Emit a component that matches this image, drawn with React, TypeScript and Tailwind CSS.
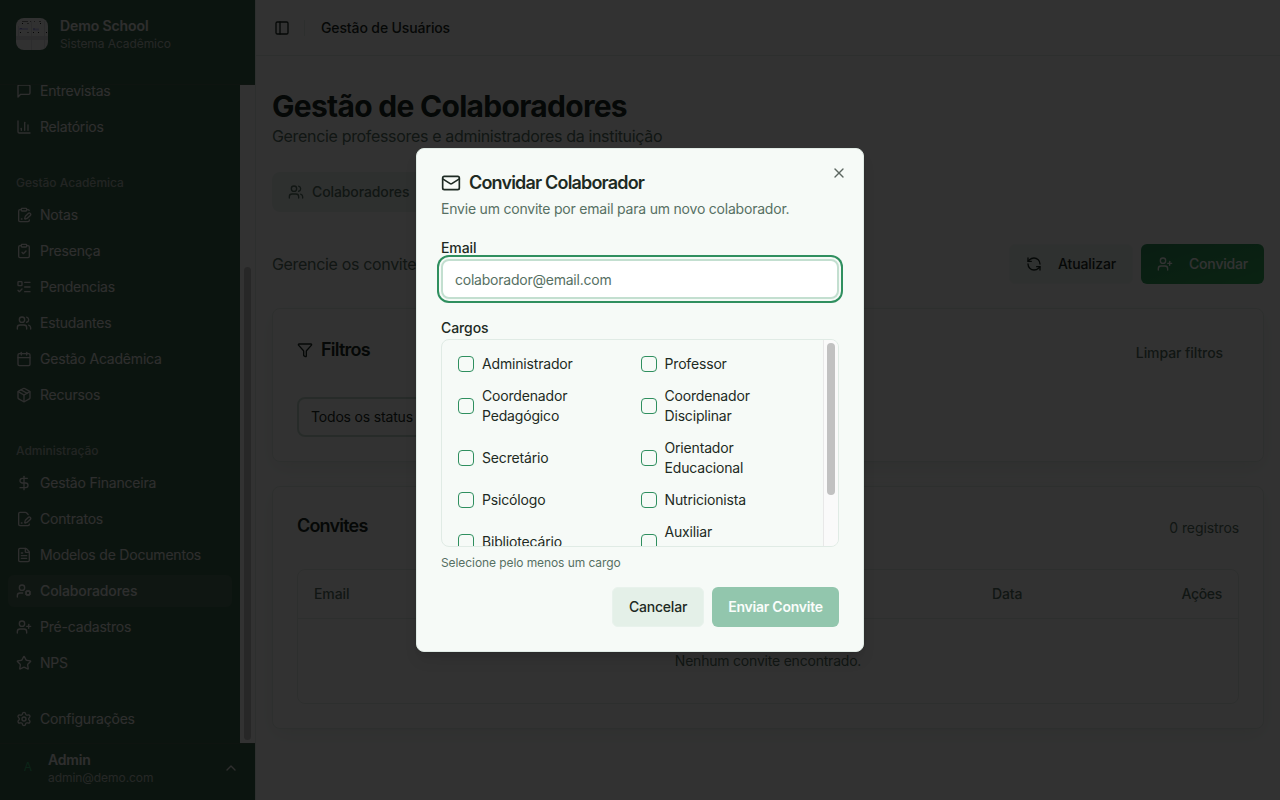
import type { ReactNode } from 'react';
import {
  Calendar,
  ChartColumn,
  ChevronUp,
  ClipboardCheck,
  ClipboardPenLine,
  DollarSign,
  FilePenLine,
  FileText,
  Funnel,
  ListTodo,
  Mail,
  Package,
  PanelLeft,
  RefreshCcw,
  Settings,
  Star,
  UserCog,
  UserPlus,
  Users,
  X,
  type LucideIcon,
} from 'lucide-react';

interface NavItem {
  label: string;
  icon?: LucideIcon;
  active?: boolean;
}

interface NavGroup {
  title?: string;
  items: NavItem[];
}

const navGroups: NavGroup[] = [
  {
    items: [{ label: 'Entrevistas' }, { label: 'Relatórios', icon: ChartColumn }],
  },
  {
    title: 'Gestão Acadêmica',
    items: [
      { label: 'Notas', icon: ClipboardPenLine },
      { label: 'Presença', icon: ClipboardCheck },
      { label: 'Pendencias', icon: ListTodo },
      { label: 'Estudantes', icon: Users },
      { label: 'Gestão Acadêmica', icon: Calendar },
      { label: 'Recursos', icon: Package },
    ],
  },
  {
    title: 'Administração',
    items: [
      { label: 'Gestão Financeira', icon: DollarSign },
      { label: 'Contratos', icon: FilePenLine },
      { label: 'Modelos de Documentos', icon: FileText },
      { label: 'Colaboradores', icon: UserCog, active: true },
      { label: 'Pré-cadastros', icon: UserPlus },
      { label: 'NPS', icon: Star },
    ],
  },
  {
    items: [{ label: 'Configurações', icon: Settings }],
  },
];

const roles = [
  'Administrador',
  'Professor',
  'Coordenador Pedagógico',
  'Coordenador Disciplinar',
  'Secretário',
  'Orientador Educacional',
  'Psicólogo',
  'Nutricionista',
  'Bibliotecário',
  'Auxiliar Administrativo',
];

function MessageIcon() {
  return (
    <svg className="size-4 shrink-0" viewBox="0 0 24 24" fill="none" stroke="currentColor" strokeWidth="2" strokeLinecap="round" strokeLinejoin="round">
      <path d="M21 15a2 2 0 0 1-2 2H7l-4 4V5a2 2 0 0 1 2-2h14a2 2 0 0 1 2 2z" />
    </svg>
  );
}

function SchoolLogo() {
  return (
    <svg className="size-8 shrink-0 rounded-lg" viewBox="0 0 32 32">
      <rect width="32" height="32" fill="#f4f4f6" />
      <rect y="18" width="32" height="4" fill="#dcdce0" />
      <path d="M15.5 3v29M28.5 3v29M2.5 8v10" stroke="#d0d0d6" strokeWidth="0.7" />
      <path d="M3 11h9M17 11.500h6" stroke="#c6c6ee" strokeWidth="2" />
      <path d="M4 10.500h2M17 11h2" stroke="#8080d8" strokeWidth="1" />
      <path d="M6 3.500h6M14 3.500h1M18 3.500h1M23 3.500h2" stroke="#666" strokeWidth="0.8" />
      <path d="M6 5.500h1M11.500 5.500h1M24 5.500h1M4 14.500h1M11.500 14.500h1M17 14.500h1M22 14.500h1M30 14.500h1" stroke="#222" strokeWidth="1" />
    </svg>
  );
}

function Sidebar() {
  return (
    <aside className="flex h-full w-64 shrink-0 flex-col border-r border-[#e0e8e3] bg-[#3b654b] text-[#e6e6e6]">
      <div className="flex h-[85px] shrink-0 items-start gap-3 border-b border-[#47634f] px-4 pt-[17px]">
        <div className="pt-px">
          <SchoolLogo />
        </div>
        <div className="flex flex-col">
          <span className="text-sm leading-[18px] font-semibold tracking-[-0.1px]">Demo School</span>
          <span className="mt-px text-xs leading-4 tracking-[-0.08px] text-[#bac2bd]">Sistema Acadêmico</span>
        </div>
      </div>

      <div className="flex min-h-0 flex-1">
        <nav className="flex min-w-0 flex-1 flex-col justify-end gap-2 overflow-hidden">
          {navGroups.map((group, i) => (
            <div key={i} className="shrink-0 p-2">
              {group.title && (
                <div className="flex h-8 items-center px-2 text-xs font-medium tracking-[-0.02px] text-[#a9b5ae]">{group.title}</div>
              )}
              <ul className="flex flex-col gap-1">
                {group.items.map(({ label, icon: Icon, active }) => (
                  <li
                    key={label}
                    className={
                      active
                        ? 'flex h-8 items-center gap-2 rounded-md bg-[#4a7059] px-2 text-sm font-medium tracking-[-0.1px]'
                        : 'flex h-8 items-center gap-2 rounded-md px-2 text-sm tracking-[-0.2px]'
                    }
                  >
                    {Icon ? <Icon className="size-4 shrink-0" /> : <MessageIcon />}
                    <span>{label}</span>
                  </li>
                ))}
              </ul>
            </div>
          ))}
        </nav>
        <div className="w-[15px] shrink-0 bg-[#fafafa] px-1 pt-[182px] pb-[3px]">
          <div className="h-full rounded-full bg-[#c1c1c1]" />
        </div>
      </div>

      <div className="flex h-[57px] shrink-0 items-start border-t border-[#47634f] px-4 pt-[7px]">
        <div className="flex h-8 w-6 items-center justify-center text-xs text-[#3cb878]">A</div>
        <div className="ml-2 flex flex-1 flex-col">
          <span className="text-sm leading-[18px] font-semibold tracking-[-0.2px]">Admin</span>
          <span className="mt-px text-xs leading-4 tracking-[-0.06px] text-[#bac2bd]">admin@demo.com</span>
        </div>
        <ChevronUp className="mt-[9px] size-4" />
      </div>
    </aside>
  );
}

function Card({ children, className }: { children: ReactNode; className: string }) {
  return (
    <div className={`rounded-lg border border-[#e2ebe6] bg-[#fafafa] p-6 shadow-[0_6px_20px_-2px_rgba(40,110,75,0.1)] ${className}`}>
      {children}
    </div>
  );
}

function Content() {
  return (
    <div className="flex min-w-0 flex-1 flex-col bg-[#fafafa] text-[#1d2a23]">
      <header className="flex h-14 shrink-0 items-center border-b border-[#e2e8e4] px-4">
        <PanelLeft className="ml-0.5 size-4" />
        <div className="ml-3.5 h-4 w-px bg-[#e2e8e4]" />
        <span className="ml-4 text-sm font-medium tracking-[-0.12px]">Gestão de Usuários</span>
      </header>

      <main className="flex flex-col px-4 pt-8">
        <h1 className="text-3xl font-bold tracking-[-0.71px]">Gestão de Colaboradores</h1>
        <p className="tracking-[-0.33px] text-[#567063]">Gerencie professores e administradores da instituição</p>

        <div className="mt-6 flex h-10 w-[420px] items-center rounded-lg bg-[#e6eeea] px-4 text-[#567063]">
          <Users className="size-4" />
          <span className="ml-2 text-sm font-medium tracking-[-0.1px]">Colaboradores</span>
        </div>

        <div className="mt-8 flex h-10 items-center justify-between">
          <p className="tracking-[-0.33px] text-[#567063]">Gerencie os convites</p>
          <div className="flex gap-2">
            <button className="flex h-10 w-[124px] items-center gap-4 rounded-md border border-[#f0f5f2] bg-[#ebf2ee] px-4 text-sm font-medium tracking-[-0.1px] whitespace-nowrap">
              <RefreshCcw className="size-4 shrink-0" />
              Atualizar
            </button>
            <button className="flex h-10 w-[123px] items-center gap-4 rounded-md bg-linear-to-br from-[#2e8f5c] to-[#35ad5a] px-4 text-sm font-medium tracking-[-0.18px] whitespace-nowrap text-[#fafafa]">
              <UserPlus className="size-4 shrink-0" />
              Convidar
            </button>
          </div>
        </div>

        <Card className="mt-6 h-[154px]">
          <div className="flex h-10 items-center justify-between">
            <h2 className="mb-1.5 flex items-center gap-2 text-lg font-semibold tracking-[-0.75px]">
              <Funnel className="size-4" />
              Filtros
            </h2>
            <span className="px-4 text-sm font-medium tracking-[-0.08px] text-[#567063]">Limpar filtros</span>
          </div>
          <div className="mt-6 flex h-10 w-[200px] items-center rounded-lg border-2 border-[#c3d8cd] px-3 text-sm tracking-[-0.17px]">
            Todos os status
          </div>
        </Card>

        <Card className="mt-6 h-[243px]">
          <div className="flex h-[34px] items-center justify-between">
            <h2 className="mb-[5px] text-lg font-semibold tracking-[-0.8px]">Convites</h2>
            <span className="text-sm tracking-[-0.1px] text-[#567063]">0 registros</span>
          </div>
          <div className="mt-6 h-[135px] rounded-lg border border-[#e2e8e4] text-sm">
            <div className="flex h-[49px] items-center border-b border-[#e2e8e4] px-4 font-medium tracking-[-0.1px] text-[#567063]">
              <span className="w-[678px]">Email</span>
              <span className="flex-1">Data</span>
              <span className="tracking-[-0.3px]">Ações</span>
            </div>
            <p className="flex h-[84px] items-center justify-center tracking-[-0.21px] text-[#567063]">Nenhum convite encontrado.</p>
          </div>
        </Card>
      </main>
    </div>
  );
}

function InviteDialog() {
  return (
    <div className="relative flex h-[504px] w-[448px] flex-col rounded-lg border border-[#e0ebe5] bg-[#f6faf7] px-6 pt-[25px] text-[#1d2a23] shadow-lg">
      <X className="absolute top-4 right-4 size-4 opacity-70" />

      <h2 className="flex h-[18px] items-center gap-2 text-lg leading-none font-semibold tracking-[-0.82px]">
        <Mail className="size-5" />
        Convidar Colaborador
      </h2>
      <p className="mt-[7px] text-sm tracking-[-0.21px] text-[#567063]">Envie um convite por email para um novo colaborador.</p>

      <label className="mt-[19px] text-sm font-medium tracking-[-0.1px]">Email</label>
      <input
        className="mt-px h-10 w-full shrink-0 rounded-lg border-2 border-[#c3dfd0] bg-white px-3 text-sm tracking-[-0.23px] ring-2 ring-[#2f8f5f] ring-offset-2 ring-offset-[#f6faf7] outline-none placeholder:text-[#567063]"
        placeholder="colaborador@email.com"
      />

      <label className="mt-[19px] text-sm font-medium tracking-[-0.1px]">Cargos</label>
      <div className="mt-px flex h-52 shrink-0 overflow-hidden rounded-lg border border-[#e0ebe5]">
        <div className="grid min-w-0 flex-1 auto-rows-max grid-cols-2 gap-x-4 gap-y-3 px-4 pt-[14px]">
          {roles.map((role) => (
            <label key={role} className="flex items-center gap-2 text-sm tracking-[-0.17px]">
              <span className="size-4 shrink-0 rounded-[4px] border border-[#2f8f5f]" />
              <span className="max-w-[110px]">{role}</span>
            </label>
          ))}
        </div>
        <div className="w-[15px] shrink-0 border-l border-[#e8e8e8] bg-[#fafafa] pt-[3px] pr-[3px] pl-[3px]">
          <div className="h-[152px] rounded-full bg-[#c1c1c1]" />
        </div>
      </div>
      <p className="mt-2 text-xs tracking-[-0.08px] text-[#567063]">Selecione pelo menos um cargo</p>

      <div className="mt-4 flex justify-end gap-2">
        <button className="h-10 w-[92px] rounded-md border border-[#e8f2ec] bg-[#e4f0e8] text-sm font-medium tracking-[-0.2px]">
          Cancelar
        </button>
        <button className="h-10 w-[127px] rounded-md bg-[#92c6ad] text-sm font-semibold tracking-[-0.25px] text-[#fafdfb]">
          Enviar Convite
        </button>
      </div>
    </div>
  );
}

export default function App() {
  return (
    <div className="relative flex h-[800px] w-[1280px] overflow-hidden font-['Inter',sans-serif]">
      <Sidebar />
      <Content />
      <div className="absolute inset-0 flex items-center justify-center bg-black/80">
        <InviteDialog />
      </div>
    </div>
  );
}
